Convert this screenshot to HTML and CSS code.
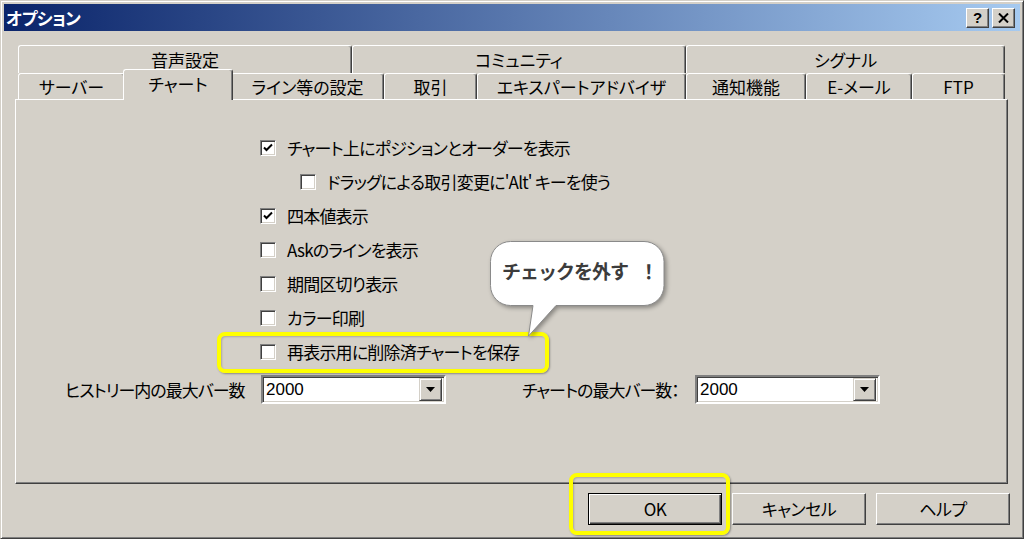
FILE: index.html
```html
<!DOCTYPE html>
<html lang="ja">
<head>
<meta charset="utf-8">
<title>オプション</title>
<link rel="stylesheet" href="styles.css">
</head>
<body>
<div class="window">
  <div class="titlebar">
    <span class="title">オプション</span>
    <span class="tbtn help">?</span>
    <span class="tbtn close">
      <svg width="11" height="10" viewBox="0 0 11 10"><path d="M1 0.5 L10 9.5 M10 0.5 L1 9.5" stroke="#000" stroke-width="2"/></svg>
    </span>
  </div>
  <div class="content">
    <div class="tabrow row1">
      <div class="tab">音声設定</div>
      <div class="tab">コミュニティ</div>
      <div class="tab">シグナル</div>
    </div>
    <div class="tabrow row2">
      <div class="tab">サーバー</div>
      <div class="tab selected">チャート</div>
      <div class="tab">ライン等の設定</div>
      <div class="tab">取引</div>
      <div class="tab">エキスパートアドバイザ</div>
      <div class="tab">通知機能</div>
      <div class="tab">E-メール</div>
      <div class="tab">FTP</div>
    </div>
    <div class="panel">
      <div class="checklist">
        <div class="row"><span class="cb checked"><svg width="12" height="12" viewBox="0 0 12 12"><path d="M2 5.5 L4.5 8 L10 2.5" fill="none" stroke="#000" stroke-width="2"/></svg></span><span class="lbl">チャート上にポジションとオーダーを表示</span></div>
        <div class="row indent"><span class="cb"></span><span class="lbl">ドラッグによる取引変更に'Alt' キーを使う</span></div>
        <div class="row"><span class="cb checked"><svg width="12" height="12" viewBox="0 0 12 12"><path d="M2 5.5 L4.5 8 L10 2.5" fill="none" stroke="#000" stroke-width="2"/></svg></span><span class="lbl">四本値表示</span></div>
        <div class="row"><span class="cb"></span><span class="lbl">Askのラインを表示</span></div>
        <div class="row"><span class="cb"></span><span class="lbl">期間区切り表示</span></div>
        <div class="row"><span class="cb"></span><span class="lbl">カラー印刷</span></div>
        <div class="row"><span class="cb"></span><span class="lbl">再表示用に削除済チャートを保存</span></div>
      </div>
      <div class="comborow">
        <span class="clabel first">ヒストリー内の最大バー数</span>
        <div class="combo"><span class="cval">2000</span><span class="dd"><svg width="9" height="5" viewBox="0 0 9 5"><path d="M0 0 H9 L4.5 5 Z" fill="#000"/></svg></span></div>
        <span class="clabel second">チャートの最大バー数：</span>
        <div class="combo"><span class="cval">2000</span><span class="dd"><svg width="9" height="5" viewBox="0 0 9 5"><path d="M0 0 H9 L4.5 5 Z" fill="#000"/></svg></span></div>
      </div>
    </div>
    <div class="buttons">
      <button class="btn default">OK</button>
      <button class="btn">キャンセル</button>
      <button class="btn">ヘルプ</button>
    </div>
  </div>

  <div class="hl hl-row"></div>
  <div class="hl hl-ok"></div>
  <div class="callout">
    <svg class="bubble" width="182" height="100" viewBox="0 0 182 100">
      <path d="M20.5 0.5 H154 A20 20 0 0 1 174 20.5 V44.5 A20 20 0 0 1 154 64.5 H66 L38.5 95 L43 64.5 H20.5 A20 20 0 0 1 0.5 44.5 V20.5 A20 20 0 0 1 20.5 0.5 Z" fill="#fff" stroke="#8a8a8a" stroke-width="1"/>
    </svg>
    <span class="ctext">チェックを外す <span class="excl">！</span></span>
  </div>
</div>
</body>
</html>
```
FILE: styles.css
```css
* { box-sizing: border-box; }
body {
  margin: 0;
  background: #d4d0c8;
  font-family: "Noto Sans CJK JP", "Noto Sans", sans-serif;
  color: #000;
}
.window {
  position: relative;
  width: 1024px;
  height: 539px;
  background: #d4d0c8;
  border: 1px solid;
  border-color: #d4d0c8 #404040 #404040 #d4d0c8;
  box-shadow: inset 1px 1px #fff, inset -1px -1px #808080;
  padding: 3px;
  display: flex;
  flex-direction: column;
}
.titlebar {
  height: 27px;
  flex: none;
  background: linear-gradient(to right, #0a246a, #a6caf0);
  display: flex;
  align-items: center;
  padding: 0 5px 0 2px;
}
.title {
  flex: 1;
  color: #fff;
  font-weight: bold;
  font-size: 17px;
  line-height: 1;
  letter-spacing: -0.5px;
  font-feature-settings: "palt";
}
.tbtn {
  width: 23px;
  height: 20px;
  margin-left: 3px;
  background: #d4d0c8;
  border: 1px solid;
  border-color: #fff #404040 #404040 #fff;
  box-shadow: inset -1px -1px #808080;
  display: flex;
  align-items: center;
  justify-content: center;
  font-family: "Liberation Sans", sans-serif;
  font-weight: bold;
  font-size: 15px;
  line-height: 1;
}
.content {
  flex: 1;
  display: flex;
  flex-direction: column;
  padding: 14px 11px 0 11px;
}
.tabrow {
  display: grid;
  width: 987px;
  margin-left: 3px;
  flex: none;
}
.row1 { grid-template-columns: 334px 334px 319px; height: 28px; }
.row2 { grid-template-columns: 107px 106px 153px 93px 209px 120px 106px 93px; height: 26px; }
.tab {
  background: #d4d0c8;
  border-top: 1px solid #fff;
  border-left: 1px solid #fff;
  border-right: 1px solid #404040;
  box-shadow: inset -1px 0 #808080;
  border-radius: 3px 3px 0 0;
  display: flex;
  align-items: center;
  justify-content: center;
  font-size: 17px;
  line-height: 1;
  font-feature-settings: "palt";
}
.tab.selected {
  position: relative;
  z-index: 2;
  margin: -4px -2px -1px -2px;
  padding-bottom: 3px;
}
.panel {
  width: 993px;
  height: 385px;
  flex: none;
  border: 1px solid;
  border-color: #fff #404040 #404040 #fff;
  box-shadow: inset -1px -1px #808080;
  padding-top: 31px;
}
.checklist {
  display: flex;
  flex-direction: column;
  padding-left: 244px;
}
.row {
  height: 34px;
  display: flex;
  align-items: center;
}
.row.indent { padding-left: 40px; }
.cb {
  width: 16px;
  height: 16px;
  flex: none;
  background: #fff;
  border: 1px solid;
  border-color: #808080 #fff #fff #808080;
  box-shadow: inset 1px 1px #404040, inset -1px -1px #d4d0c8;
  margin-right: 11px;
  display: flex;
  align-items: center;
  justify-content: center;
}
.lbl, .clabel {
  font-size: 17px;
  line-height: 1;
  font-feature-settings: "palt";
  white-space: nowrap;
}
.lbl {
  letter-spacing: -0.8px;
  padding-bottom: 2px;
}
.comborow {
  margin-top: 6px;
  height: 29px;
  display: flex;
  align-items: center;
  padding-left: 49px;
}
.clabel { letter-spacing: -1px; padding-bottom: 1px; }
.clabel.first { width: 196px; }
.clabel.second { width: 173px; margin-left: 76px; }
.combo {
  width: 185px;
  height: 29px;
  background: #fff;
  border: 2px solid;
  border-color: #808080 #fff #fff #808080;
  box-shadow: inset 1px 1px #404040, inset -1px -1px #d4d0c8;
  display: flex;
  align-items: center;
  padding: 2px 2px 2px 3px;
}
.cval {
  flex: 1;
  font-family: "Liberation Sans", sans-serif;
  font-size: 17px;
  line-height: 1;
}
.dd {
  width: 23px;
  height: 23px;
  background: #d4d0c8;
  border: 1px solid;
  border-color: #d4d0c8 #404040 #404040 #d4d0c8;
  box-shadow: inset 1px 1px #fff, inset -1px -1px #808080;
  display: flex;
  align-items: center;
  justify-content: center;
}
.buttons {
  margin-top: 9px;
  display: flex;
  justify-content: flex-end;
  gap: 10px;
  margin-right: -1px;
}
.btn {
  width: 134px;
  height: 32px;
  background: #d4d0c8;
  border: 1px solid;
  border-color: #fff #404040 #404040 #fff;
  box-shadow: inset -1px -1px #808080;
  font-family: "Noto Sans CJK JP", "Liberation Sans", sans-serif;
  font-size: 17px;
  line-height: 1;
  font-feature-settings: "palt";
  letter-spacing: -0.5px;
  color: #000;
  padding: 0 0 2px 0;
}
.btn.default {
  border: 1px solid #000;
  box-shadow: inset 1px 1px #fff, inset -1px -1px #404040, inset -2px -2px #808080;
}
.hl {
  position: absolute;
  border: 4px solid #ffff00;
  border-radius: 8px;
  box-shadow: 1px 1px 2px rgba(0,0,0,0.35), inset 1px 1px 2px rgba(0,0,0,0.2);
  z-index: 5;
}
.hl-row { left: 216px; top: 331px; width: 332px; height: 41px; }
.hl-ok { left: 568px; top: 472px; width: 161px; height: 62px; }
.callout {
  position: absolute;
  left: 489px;
  top: 240px;
  width: 182px;
  height: 100px;
  z-index: 6;
}
.bubble {
  display: block;
  filter: drop-shadow(2px 2px 2px rgba(0,0,0,0.35));
}
.ctext {
  position: absolute;
  left: 12px;
  top: 20px;
  font-size: 19px;
  line-height: 1;
  font-weight: bold;
  color: #3c3c3c;
  white-space: nowrap;
  letter-spacing: -1px;
}
.excl { margin-left: 8px; }
```
